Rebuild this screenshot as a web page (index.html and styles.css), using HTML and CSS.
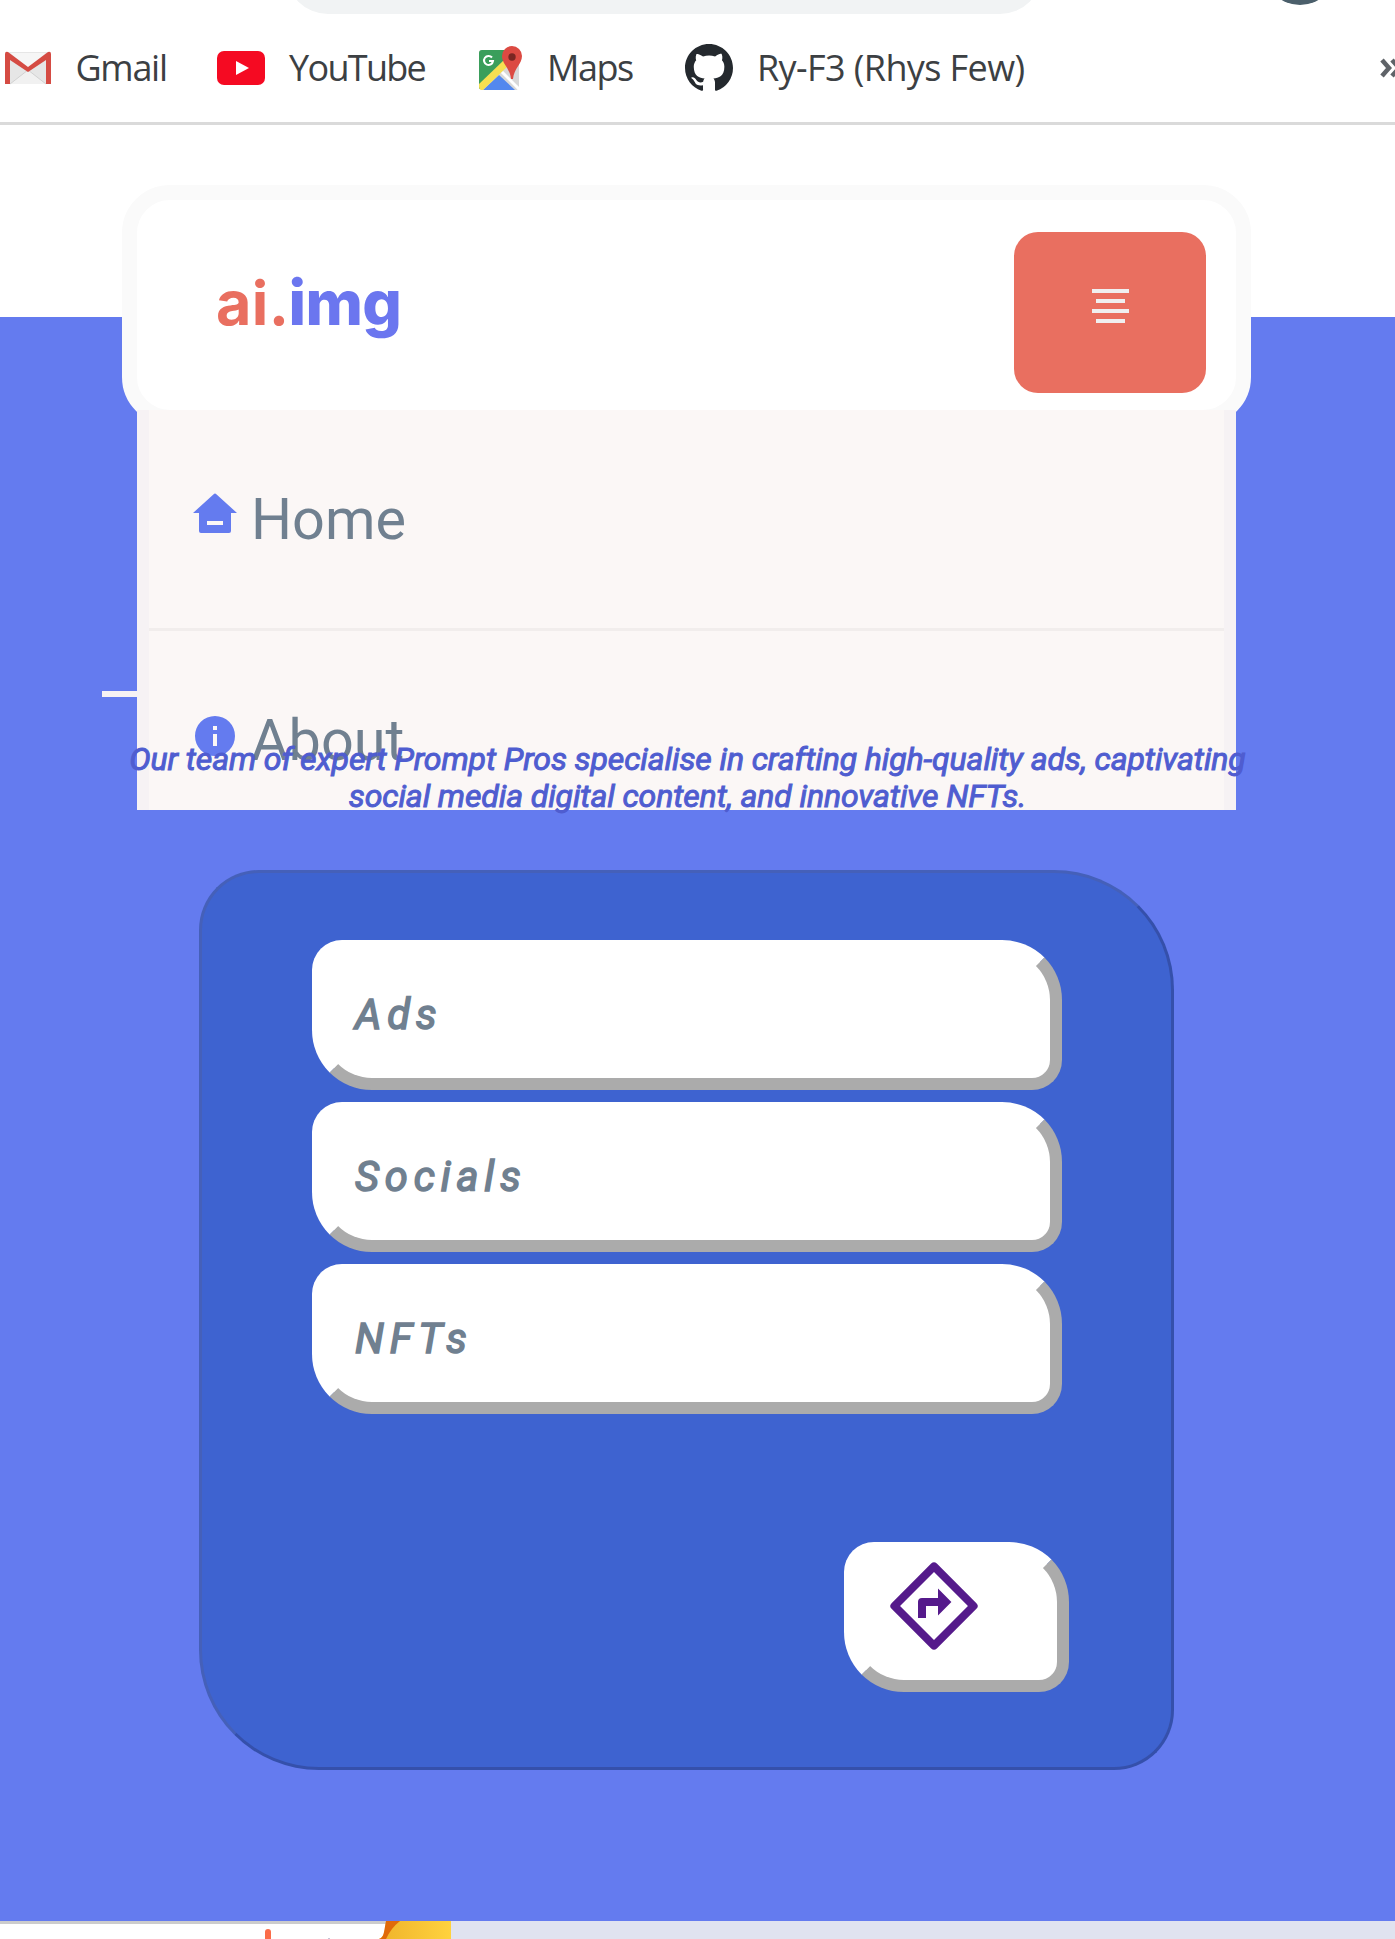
FILE: index.html
```
<!DOCTYPE html>
<html lang="en">
<head>
<meta charset="utf-8">
<title>ai.img</title>
<link rel="stylesheet" href="styles.css">
</head>
<body>
<div class="browser">
  <div class="address"></div>
  <div class="avatar"></div>
  <div class="bookmarks">
    <div class="bookmark gmail">
      <svg width="46" height="34" viewBox="0 0 46 34"><rect x="1" y="1" width="44" height="32" fill="#e6e6e6"/><path d="M5 33L23 19l18 14z" fill="#f1f1f1"/><path d="M5 2h36L23 17z" fill="#f6f6f6"/><path d="M23 19L5 33M23 19l18 14" stroke="#d2d2d2"/><path d="M0 33V3q0-3 3-2l20 15L43 1q3-1 3 2v30h-5V9L23 21 5 9v24z" fill="#d54b43"/></svg>
      <span>Gmail</span>
    </div>
    <div class="bookmark youtube">
      <svg width="48" height="34" viewBox="0 0 48 34"><rect width="48" height="34" rx="7" fill="#f50a22"/><path d="M19 10l13 7-13 7z" fill="#fff"/></svg>
      <span>YouTube</span>
    </div>
    <div class="bookmark maps">
      <svg width="44" height="44" viewBox="0 0 44 44"><rect y="4" width="40" height="40" rx="3" fill="#d8d8d8"/><path d="M3 4h27L20 25 0 43V7q0-3 3-3z" fill="#3a9e5b"/><path d="M20 29L4 44h32z" fill="#5388ee"/><path d="M0 38L25 14l4 6L4 44H2q-2-1-2-3z" fill="#f6df52"/><path d="M23 26L40 43" stroke="#fff" stroke-width="3"/><path d="M13 11.500a4.500 4.500 0 1 0 1 3.500h-4" fill="none" stroke="#fff" stroke-width="2"/><path d="M33 0a10 10 0 0 1 10 10c0 8-8 12-9 23h-2c-1-11-9-15-9-23A10 10 0 0 1 33 0z" fill="#dc4a42"/><circle cx="33" cy="11" r="3.700" fill="#7a2622"/></svg>
      <span>Maps</span>
    </div>
    <div class="bookmark github">
      <svg width="48" height="48" viewBox="0 0 16 16"><path fill="#24292e" d="M8 0C3.580 0 0 3.580 0 8c0 3.540 2.290 6.530 5.470 7.590.4.070.55-.17.55-.38 0-.19-.01-.82-.01-1.490-2.010.37-2.530-.49-2.690-.94-.09-.23-.48-.94-.82-1.130-.28-.15-.68-.52-.01-.53.63-.01 1.080.58 1.230.82.72 1.210 1.870.87 2.330.66.07-.52.28-.87.51-1.070-1.780-.2-3.640-.89-3.640-3.950 0-.87.31-1.590.82-2.150-.08-.2-.36-1.020.08-2.120 0 0 .67-.21 2.200.82.64-.18 1.320-.27 2-.27s1.360.09 2 .27c1.530-1.040 2.200-.82 2.200-.82.44 1.100.16 1.920.08 2.120.51.56.82 1.270.82 2.150 0 3.070-1.870 3.750-3.650 3.950.29.25.54.73.54 1.480 0 1.070-.01 1.930-.01 2.200 0 .21.15.46.55.38A8.010 8.010 0 0 0 16 8c0-4.420-3.580-8-8-8z"/></svg>
      <span>Ry-F3 (Rhys Few)</span>
    </div>
    <svg class="more" width="26" height="20" viewBox="0 0 26 20"><path d="M2 2l7 8-7 8M12 2l7 8-7 8" fill="none" stroke="#5f6368" stroke-width="4.500"/></svg>
  </div>
</div>

<header class="header">
  <svg class="logo" width="190" height="80" viewBox="0 0 190 80"><text class="logo-a" x="0" y="55" textLength="73">ai.</text><text class="logo-b" x="72.5" y="54.5" textLength="113.5">img</text></svg>
  <button class="toggle" aria-label="Menu"><i></i><i></i><i></i><i></i></button>
  <nav class="menu">
    <a class="entry"><svg width="48" height="48" viewBox="0 0 24 24"><path fill-rule="evenodd" d="M20 20a1 1 0 0 1-1 1H5a1 1 0 0 1-1-1v-9H1l10.327-9.388a1 1 0 0 1 1.346 0L23 11h-3zM8 15v2h8v-2z"/></svg><span>Home</span></a>
    <a class="entry"><svg width="48" height="48" viewBox="0 0 24 24"><path fill-rule="evenodd" d="M12 22a10 10 0 1 1 0-20 10 10 0 0 1 0 20zM11 11v6h2v-6zM11 7v2h2V7z"/></svg><span>About</span></a>
  </nav>
</header>

<main class="hero">
  <div class="rule"></div>
  <p class="intro"><span class="line">Our team of expert Prompt Pros specialise in crafting high-quality ads, captivating</span><span class="line">social media digital content, and innovative NFTs.</span></p>
  <section class="card">
    <div class="pill">Ads</div>
    <div class="pill">Socials</div>
    <div class="pill">NFTs</div>
    <a class="pill go"><svg width="96" height="96" viewBox="0 0 24 24"><path fill-rule="evenodd" fill="#551a8b" d="M12.707 1.393l9.900 9.900a1 1 0 0 1 0 1.414l-9.900 9.900a1 1 0 0 1-1.414 0l-9.900-9.900a1 1 0 0 1 0-1.414l9.900-9.900a1 1 0 0 1 1.414 0zM12 3.515L3.515 12 12 20.485 20.485 12zM13 10V7.600L16.350 11 13 14.400V12h-3v3H8v-4a1 1 0 0 1 1-1z"/></svg></a>
  </section>
</main>

<footer class="next">
  <svg width="451" height="18" viewBox="0 0 451 18"><path d="M0 0h388v3H0z" fill="#ccc"/><path d="M265 18v-7a3 3 0 0 1 6 0v7z" fill="#fb6c48"/><path d="M328 17h2v1h-2z" fill="#c5c5d6"/><path d="M386 0h65v18h-72q4-1 6-9z" fill="url(#sun)"/><path d="M386 0h14q-9 7-14 18h-7q4-1 5-7z" fill="#e06a0a"/><defs><linearGradient id="sun"><stop offset="0" stop-color="#efb32b"/><stop offset="1" stop-color="#ffd23e"/></linearGradient></defs></svg>
</footer>
</body>
</html>
```
FILE: styles.css
```
* { box-sizing: border-box; }
body { margin: 0; position: relative; width: 1395px; height: 1939px; overflow: hidden; background: #fff; font-family: Roboto, sans-serif; }
svg { display: block; flex: none; }

.browser { position: relative; height: 125px; border-bottom: 3px solid #dadada; overflow: hidden; }
.address { width: 756px; height: 84px; margin: -70px 0 0 286px; border-radius: 42px; background: #f1f3f4; }
.avatar { position: absolute; left: 1264px; top: -67px; width: 72px; height: 72px; border-radius: 50%; background: #4b5f6b; }
.bookmarks { display: flex; align-items: center; height: 107px; padding-left: 5px; }
.bookmark { display: flex; align-items: center; flex: none; font: 36px/48px "Open Sans", sans-serif; color: #3c4043; white-space: nowrap; }
.gmail { width: 212px; gap: 24.500px; letter-spacing: -1.300px; }
.youtube { width: 262px; gap: 24px; letter-spacing: -1.700px; }
.maps { width: 206px; gap: 24px; letter-spacing: -1.500px; }
.github { width: 695px; gap: 24px; letter-spacing: -.6px; }

.header { position: absolute; z-index: 1; left: 122px; top: 185px; width: 1129px; height: 240px; border: 15px solid #fafafa; border-radius: 48px; background: #fff; display: flex; justify-content: space-between; align-items: flex-start; padding: 32px 30px 0 79px; }
.logo { margin-top: 38px; overflow: visible; }
.logo text { font: 700 61px Inter, sans-serif; }
.logo .logo-a { fill: #e96f60; }
.logo .logo-b { fill: #6b76ef; font-size: 62px; font-weight: 800; }
.toggle { width: 192px; height: 161px; border: 0; border-radius: 24px; padding: 57px 0 0; background: #e96f60; display: flex; flex-direction: column; align-items: center; gap: 6px; }
.toggle i { width: 37px; height: 4px; background: #f0eff0; }
.toggle i:nth-child(even) { width: 29px; }

.menu { position: absolute; left: 0; top: 210px; width: 1099px; height: 400px; overflow: hidden; border: solid #f6f2f4; border-width: 0 12px; background: #fbf7f6; }
.entry { display: flex; height: 221px; padding: 81px 0 0 42px; gap: 12px; border-bottom: 3px solid #f1edec; font-size: 57.6px; line-height: 58px; color: #708090; }
.entry svg { fill: #647bef; }

.hero { display: flex; flex-direction: column; align-items: center; height: 1604px; margin-top: 192px; background: #647bef; }
.rule { align-self: flex-start; width: 1130px; height: 6px; margin: 374px 0 0 102px; background: #f6f2f4; }
.intro { position: relative; z-index: 2; width: 1129px; height: 74px; margin: 44px 20px 0 0; color: #4f5dd0; font: italic 400 32px/37px Roboto, sans-serif; text-align: center; -webkit-text-stroke: 1px #4f5dd0; }
.line { display: block; white-space: nowrap; letter-spacing: -.1px; }
.card { width: 975px; height: 900px; margin: 55px 22px 0 0; padding: 67px 102px 0 110px; display: flex; flex-direction: column; gap: 12px; background: #3e63d0; border: 3px solid; border-color: #4560b9 #3550ab #3550ab #4560b9; border-radius: 60px 120px 60px 120px; }
.pill { flex: none; width: 750px; height: 150px; padding: 38px 31px 0; border: 12px solid; border-color: #fff #ababab #ababab #fff; border-radius: 30px 60px 30px 60px; background: #fff; font: italic 400 41.6px/50px Roboto, sans-serif; letter-spacing: 5.900px; color: #708090; -webkit-text-stroke: 1.600px #708090; }
.go { width: 225px; margin-top: 116px; align-self: flex-end; padding: 4px 30px 0; }
.next { height: 18px; background: linear-gradient(90deg, #fff 451px, #e0e3f0 451px); }
```
